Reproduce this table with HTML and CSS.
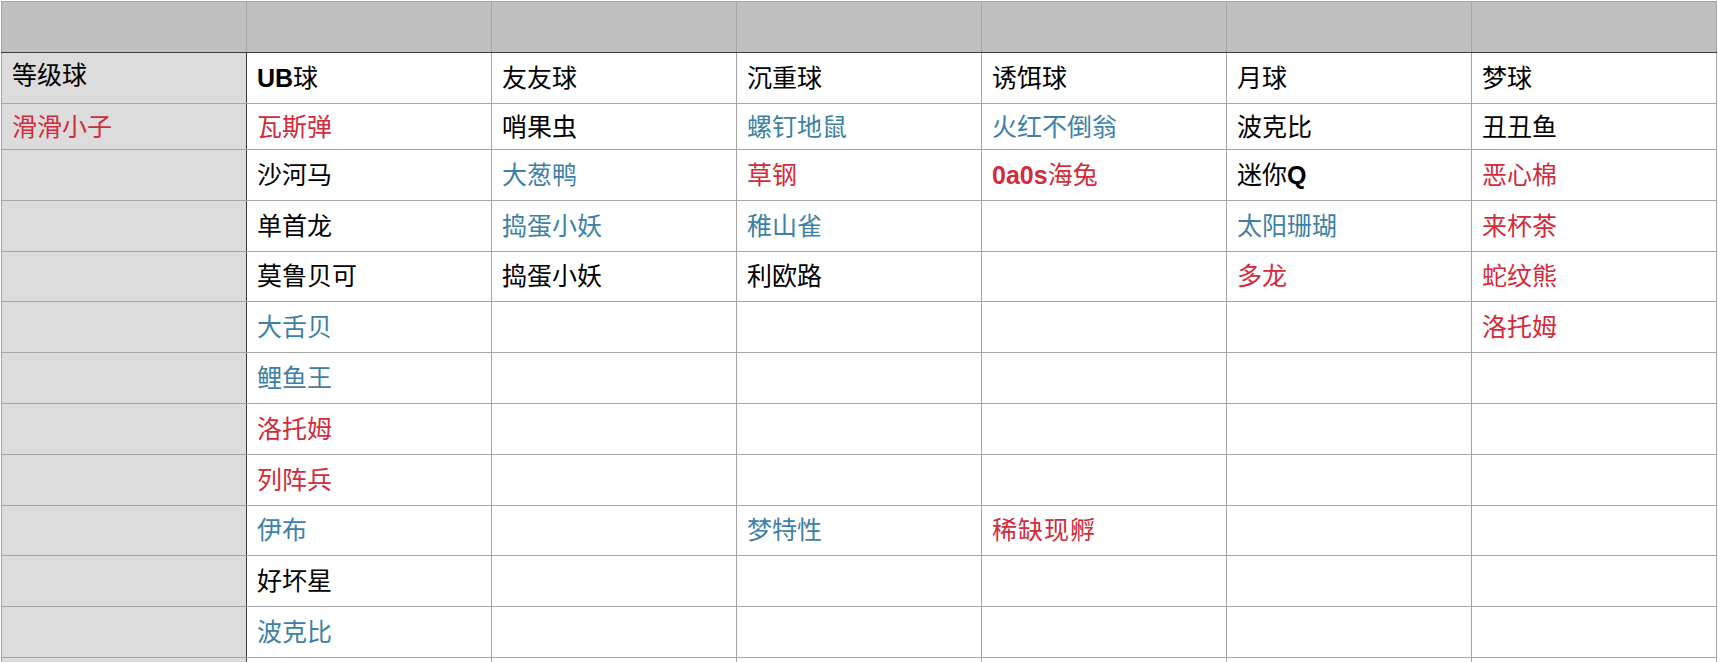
FILE: index.html
```html
<!DOCTYPE html>
<html lang="zh">
<head>
<meta charset="utf-8">
<title>球种表</title>
<link rel="stylesheet" href="styles.css">
</head>
<body>
<div class="sheet">
<table class="grid">
  <colgroup>
    <col class="c"><col class="c"><col class="c"><col class="c"><col class="c"><col class="c"><col class="c">
  </colgroup>
  <thead>
    <tr class="head">
      <th class="rowhead"></th><th></th><th></th><th></th><th></th><th></th><th></th>
    </tr>
  </thead>
  <tbody>
    <tr class="r1">
      <td class="rowhead up">等级球</td>
      <td><b class="lat">UB</b>球</td>
      <td>友友球</td>
      <td>沉重球</td>
      <td>诱饵球</td>
      <td>月球</td>
      <td>梦球</td>
    </tr>
    <tr class="r2">
      <td class="rowhead red">滑滑小子</td>
      <td class="red">瓦斯弹</td>
      <td>哨果虫</td>
      <td class="blue">螺钉地鼠</td>
      <td class="blue">火红不倒翁</td>
      <td>波克比</td>
      <td>丑丑鱼</td>
    </tr>
    <tr>
      <td class="rowhead"></td>
      <td>沙河马</td>
      <td class="blue">大葱鸭</td>
      <td class="red">草钢</td>
      <td class="red"><b class="lat">0a0s</b>海兔</td>
      <td>迷你<b class="lat">Q</b></td>
      <td class="red">恶心棉</td>
    </tr>
    <tr>
      <td class="rowhead"></td>
      <td>单首龙</td>
      <td class="blue">捣蛋小妖</td>
      <td class="blue">稚山雀</td>
      <td></td>
      <td class="blue">太阳珊瑚</td>
      <td class="red">来杯茶</td>
    </tr>
    <tr>
      <td class="rowhead"></td>
      <td>莫鲁贝可</td>
      <td>捣蛋小妖</td>
      <td>利欧路</td>
      <td></td>
      <td class="red">多龙</td>
      <td class="red">蛇纹熊</td>
    </tr>
    <tr>
      <td class="rowhead"></td>
      <td class="blue">大舌贝</td>
      <td></td><td></td><td></td><td></td>
      <td class="red">洛托姆</td>
    </tr>
    <tr>
      <td class="rowhead"></td>
      <td class="blue">鲤鱼王</td>
      <td></td><td></td><td></td><td></td><td></td>
    </tr>
    <tr>
      <td class="rowhead"></td>
      <td class="red">洛托姆</td>
      <td></td><td></td><td></td><td></td><td></td>
    </tr>
    <tr>
      <td class="rowhead"></td>
      <td class="red">列阵兵</td>
      <td></td><td></td><td></td><td></td><td></td>
    </tr>
    <tr>
      <td class="rowhead"></td>
      <td class="blue">伊布</td>
      <td></td>
      <td class="blue">梦特性</td>
      <td class="red narrow">稀缺现孵</td>
      <td></td><td></td>
    </tr>
    <tr>
      <td class="rowhead"></td>
      <td>好坏星</td>
      <td></td><td></td><td></td><td></td><td></td>
    </tr>
    <tr>
      <td class="rowhead"></td>
      <td class="blue">波克比</td>
      <td></td><td></td><td></td><td></td><td></td>
    </tr>
    <tr>
      <td class="rowhead"></td>
      <td></td><td></td><td></td><td></td><td></td><td></td>
    </tr>
  </tbody>
</table>
</div>
</body>
</html>
```

FILE: styles.css
```css
html, body {
  margin: 0;
  padding: 0;
  background: #ffffff;
}

.sheet {
  padding: 1px 0 0 1px;
  overflow: hidden;
  height: 661px;
}

.grid {
  border-collapse: collapse;
  table-layout: fixed;
  width: 1716px;
  font-family: "Liberation Sans", "Noto Sans CJK SC", sans-serif;
  font-size: 25px;
  color: #000000;
}

.grid .c {
  width: 245px;
}

.grid th,
.grid td {
  border: 1px solid #a6a6a6;
  padding: 0 0 0 10px;
  text-align: left;
  vertical-align: middle;
  white-space: nowrap;
  line-height: 28px;
  font-weight: normal;
}

.head th {
  background: #bfc0bf;
  height: 50px;
  border-bottom: 1px solid #3c3c3c;
}

.grid tbody tr {
  height: 50.8px;
}

.grid tbody tr.r1 {
  height: 51px;
}

.grid tbody tr.r2 {
  height: 46px;
}

.grid td.rowhead {
  background: #dcdcdc;
  border-right: 1px solid #3c3c3c;
}

.grid th.rowhead {
  border-right: 1px solid #a6a6a6;
}

.grid td.up {
  padding-bottom: 6px;
}

.lat {
  font-weight: bold;
}

.red {
  color: #d22b3c;
}

.blue {
  color: #3d82a6;
}

.narrow {
  letter-spacing: 1px;
}
```
